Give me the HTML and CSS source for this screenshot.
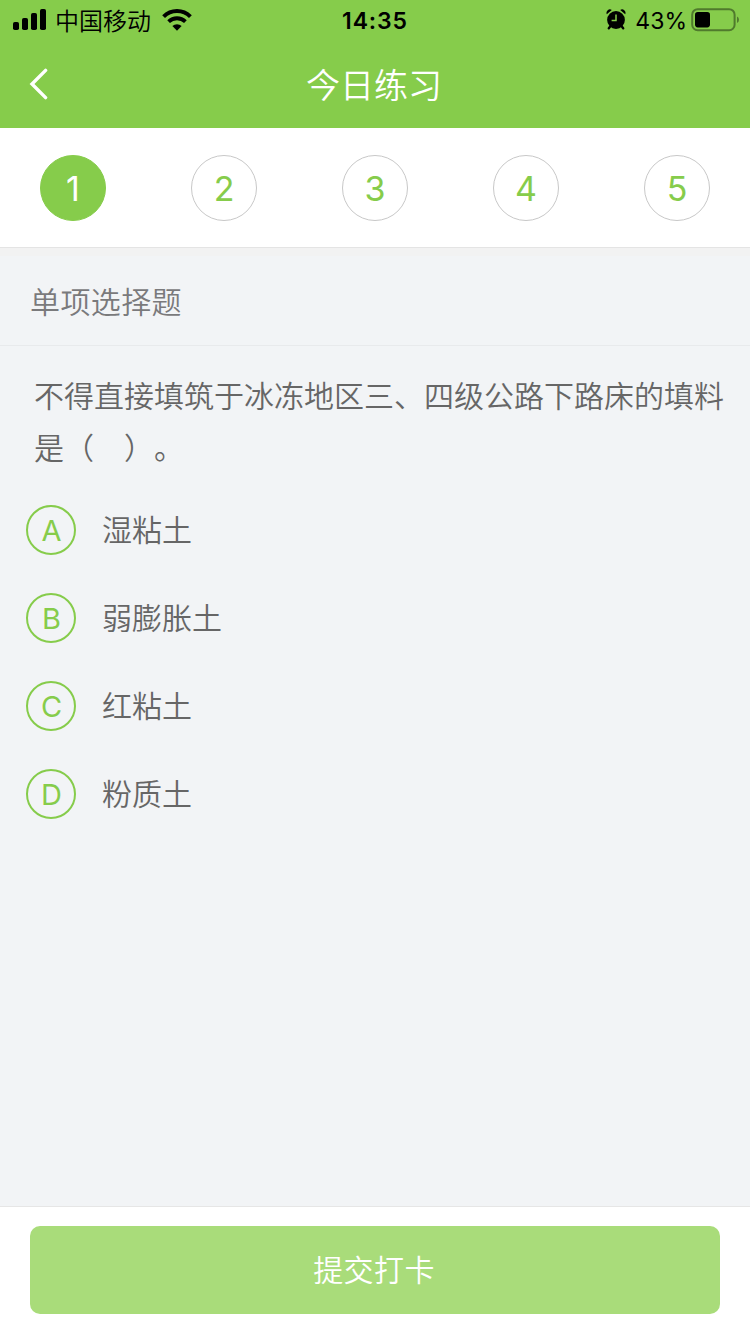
FILE: index.html
```html
<!DOCTYPE html>
<html lang="zh-CN">
<head>
    <meta charset="UTF-8">
    <meta name="viewport" content="width=device-width, initial-scale=1.0">
    <title>今日练习</title>
    <link rel="stylesheet" href="styles.css">
</head>
<body>
    <div class="app">
        <header class="header">
            <div class="status-bar">
                <div class="status-left">
                    <svg class="signal" width="34" height="22" viewBox="0 0 34 22">
                        <rect x="0" y="13" width="6" height="8" rx="1.8"/>
                        <rect x="9" y="9" width="6" height="12" rx="1.8"/>
                        <rect x="18" y="4" width="6" height="17" rx="1.8"/>
                        <rect x="27" y="0" width="6" height="21" rx="1.8"/>
                    </svg>
                    <span class="carrier">中国移动</span>
                    <svg class="wifi" width="30" height="22" viewBox="0 0 30 22">
                        <path d="M1.6 7.6 A19 19 0 0 1 28.4 7.6" fill="none" stroke="#000" stroke-width="4"/>
                        <path d="M6.6 12.7 A11.9 11.9 0 0 1 23.4 12.7" fill="none" stroke="#000" stroke-width="3.8"/>
                        <path d="M10.4 17.1 A6.6 6.6 0 0 1 19.6 17.1 L15 21.8 Z"/>
                    </svg>
                </div>
                <span class="time">14:35</span>
                <div class="status-right">
                    <svg class="alarm" width="20" height="21" viewBox="0 0 20 21">
                        <circle cx="10" cy="11" r="8.9"/>
                        <path d="M.8 5.2 A3.4 3.4 0 0 1 5.8 1 Z M19.2 5.2 A3.4 3.4 0 0 0 14.2 1 Z"/>
                        <path d="M4.6 17 L2.8 19.2 M15.4 17 L17.2 19.2" stroke="#000" stroke-width="2.4" stroke-linecap="round"/>
                        <path d="M10 5.5 V11.4 H5.6" fill="none" stroke="#86cc4b" stroke-width="1.5"/>
                    </svg>
                    <span class="percent">43%</span>
                    <svg class="battery" width="48" height="24" viewBox="0 0 48 24">
                        <rect x="1.2" y="1.2" width="42.4" height="21" rx="5.5" fill="none" stroke="#507a2d" stroke-width="2"/>
                        <rect x="4" y="4" width="15" height="15.4" rx="2.8"/>
                        <path d="M46 8.5 Q48 9.5 48 11.7 Q48 14 46 15 Z" fill="#507a2d"/>
                    </svg>
                </div>
            </div>
            <div class="nav-bar">
                <svg class="back" width="20" height="32" viewBox="0 0 20 32">
                    <path d="M16.6 2.4 L3 16 L16.6 29.6" fill="none" stroke="#fff" stroke-width="3.4" stroke-linecap="round"/>
                </svg>
                <h1 class="title">今日练习</h1>
            </div>
        </header>

        <nav class="steps">
            <span class="step active">1</span>
            <span class="step">2</span>
            <span class="step">3</span>
            <span class="step">4</span>
            <span class="step">5</span>
        </nav>

        <main class="content">
            <h2 class="type">单项选择题</h2>
            <p class="question">不得直接填筑于冰冻地区三、四级公路下路床的填料是（&#12288;）。</p>
            <ul class="options">
                <li class="option"><span class="letter">A</span><span class="answer">湿粘土</span></li>
                <li class="option"><span class="letter">B</span><span class="answer">弱膨胀土</span></li>
                <li class="option"><span class="letter">C</span><span class="answer">红粘土</span></li>
                <li class="option"><span class="letter">D</span><span class="answer">粉质土</span></li>
            </ul>
        </main>

        <footer class="footer">
            <button class="submit">提交打卡</button>
        </footer>
    </div>
</body>
</html>
```
FILE: styles.css
```css
* {
    box-sizing: border-box;
}
body {
    margin: 0;
    font-family: Inter, "Noto Sans CJK SC", sans-serif;
    font-weight: 350;
    color: #666;
}
.app {
    display: flex;
    flex-direction: column;
    height: 1334px;
    background: #f2f4f6;
}
.header {
    height: 128px;
    background: #86cc4b;
}
.status-bar {
    display: grid;
    grid-template-columns: 1fr auto 1fr;
    align-items: center;
    height: 40px;
    padding: 0 11px 0 13px;
    color: #000;
    font-size: 24px;
    line-height: 40px;
}
.status-left,
.status-right {
    display: flex;
    align-items: center;
}
.status-right {
    justify-content: flex-end;
}
.carrier {
    margin: 0 11px 0 8px;
    padding-top: 3px;
    line-height: 37px;
}
.time {
    padding: 2px 2px 0 0;
    font-size: 23px;
    font-weight: 600;
    letter-spacing: 0.9px;
    line-height: 38px;
}
.alarm {
    margin-bottom: 2px;
}
.percent {
    margin: 0 4px 0 9px;
    padding-top: 2px;
    font-size: 23px;
    font-weight: 400;
    line-height: 38px;
}
.nav-bar {
    display: grid;
    grid-template-columns: 60px 1fr 60px;
    align-items: center;
    height: 88px;
}
.back {
    margin-left: 29px;
}
.title {
    margin: 0;
    padding: 3px 2px 0 0;
    color: #fff;
    font-size: 34px;
    font-weight: 350;
    line-height: 85px;
    text-align: center;
}
.steps {
    display: flex;
    justify-content: space-between;
    height: 120px;
    padding: 27px 40px 0;
    background: #fff;
    border-bottom: 1px solid #e4e4e4;
}
.step {
    width: 66px;
    height: 66px;
    border: 1px solid #c8c8c8;
    border-radius: 50%;
    color: #86cc4b;
    font-size: 34px;
    font-weight: 400;
    line-height: 65px;
    text-align: center;
}
.step.active {
    background: #86cc4b;
    border-color: #86cc4b;
    color: #fff;
}
.content {
    flex: 1;
}
.type {
    height: 98px;
    margin: 0;
    padding: 10px 30px 0;
    border-top: 8px solid #f2f2f2;
    border-bottom: 1px solid #e8eaec;
    color: #7a7a7c;
    font-size: 30px;
    font-weight: 350;
    letter-spacing: 0.4px;
    line-height: 72px;
}
.question {
    margin: 0;
    padding: 24px 20px 0 34px;
    font-size: 30px;
    line-height: 52px;
    text-spacing-trim: space-all;
}
.options {
    margin: 0;
    padding: 31px 26px 0;
    list-style: none;
}
.option {
    display: flex;
    align-items: center;
    height: 50px;
    margin-bottom: 38px;
    font-size: 30px;
}
.letter {
    width: 50px;
    height: 50px;
    margin-right: 26px;
    padding-left: 1px;
    border: 2px solid #86cc4b;
    border-radius: 50%;
    color: #86cc4b;
    font-size: 29px;
    font-weight: 400;
    line-height: 48px;
    text-align: center;
}
.answer {
    line-height: 50px;
}
.footer {
    height: 128px;
    padding: 19px 30px 0;
    background: #fff;
    border-top: 1px solid #e6e6e6;
}
.submit {
    display: block;
    width: 100%;
    height: 88px;
    padding: 1px 2px 0 0;
    border: none;
    border-radius: 10px;
    background: #a9dc7a;
    color: #fff;
    font-family: inherit;
    font-size: 30px;
    font-weight: 350;
    letter-spacing: 0.4px;
    line-height: 87px;
}
```
